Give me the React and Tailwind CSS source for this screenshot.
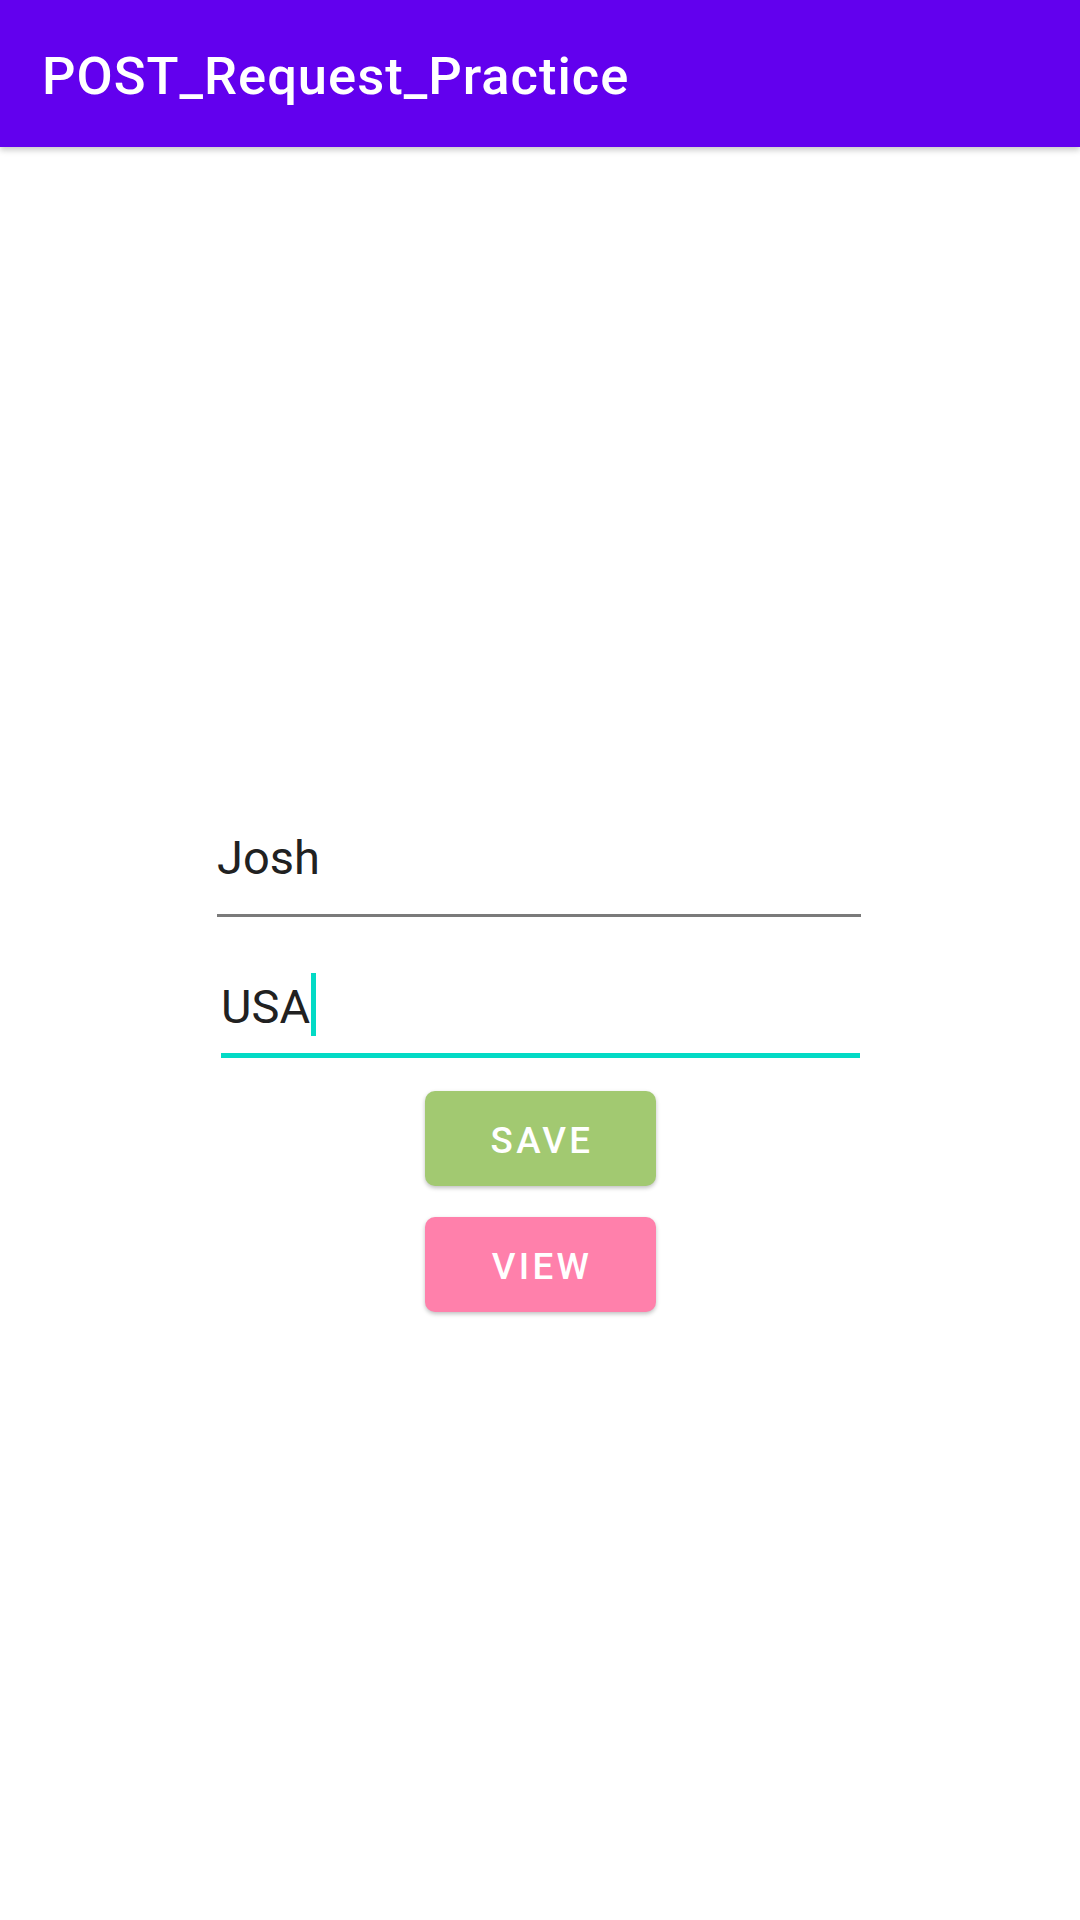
export default function App() {
  return (
    <div className="min-h-[1920px] bg-white font-['Roboto','Liberation_Sans',sans-serif]">
      {/* App bar */}
      <div className="relative z-10 h-[147px] bg-[#6200EE] shadow-[0_3px_6px_rgba(0,0,0,0.22)]">
        <h1 className="pl-[42px] pt-[45px] text-[52.5px] leading-[62px] font-medium tracking-[1px] text-white">
          POST_Request_Practice
        </h1>
      </div>

      {/* Form */}
      <div className="flex flex-col">
        <div className="ml-[217px] mt-[683px] w-[644px] border-b-[3px] border-[#7a7a7a] pb-[29px]">
          <span className="text-[47px] leading-[55px] text-[#212121]">Josh</span>
        </div>

        <div className="ml-[221px] mt-[62px] w-[639px] border-b-[5px] border-[#03DAC5] pb-[19px]">
          <span className="relative text-[47px] leading-[55px] text-[#212121]">
            USA
            <span className="absolute left-full top-[-6px] ml-[1px] h-[63px] w-[5px] bg-[#03DAC5]" />
          </span>
        </div>

        <button className="ml-[425px] mt-[33px] h-[95px] w-[231px] rounded-[10px] bg-[#A2C971] pt-[3px] pl-[3px] text-[36.75px] leading-[43px] font-medium uppercase tracking-[3.3px] text-white shadow-[0_2px_4px_rgba(0,0,0,0.25)]">
          Save
        </button>
        <button className="ml-[425px] mt-[31px] h-[95px] w-[231px] rounded-[10px] bg-[#FF80AB] pt-[3px] pl-[3px] text-[36.75px] leading-[43px] font-medium uppercase tracking-[3.3px] text-white shadow-[0_2px_4px_rgba(0,0,0,0.25)]">
          View
        </button>
      </div>
    </div>
  );
}
